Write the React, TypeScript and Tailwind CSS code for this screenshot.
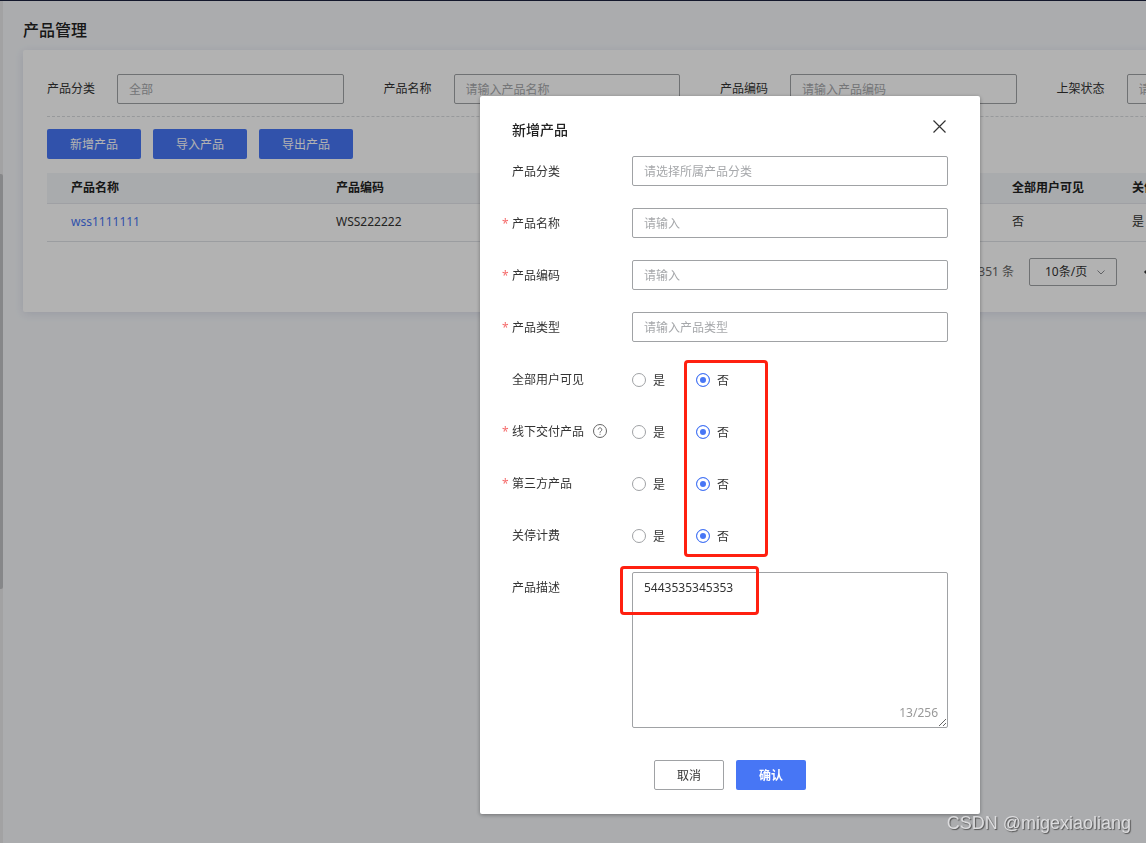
import { useState } from "react";

const filters = [
  { id: "category", label: "产品分类", placeholder: "全部" },
  { id: "name", label: "产品名称", placeholder: "请输入产品名称" },
  { id: "code", label: "产品编码", placeholder: "请输入产品编码" },
  { id: "status", label: "上架状态", placeholder: "请选择" },
];

const textFields = [
  { id: "new-category", label: "产品分类", placeholder: "请选择所属产品分类", required: false },
  { id: "new-name", label: "产品名称", placeholder: "请输入", required: true },
  { id: "new-code", label: "产品编码", placeholder: "请输入", required: true },
  { id: "new-type", label: "产品类型", placeholder: "请输入产品类型", required: true },
];

const radioFields = [
  { id: "visible", label: "全部用户可见", required: false, help: false },
  { id: "offline", label: "线下交付产品", required: true, help: true },
  { id: "third", label: "第三方产品", required: true, help: false },
  { id: "billing", label: "关停计费", required: false, help: false },
];

const inputClass =
  "h-[30px] min-w-0 flex-1 rounded-xs border border-[#a0a2a5] bg-white px-[11px] text-xs text-[#333] outline-none placeholder:text-[#a6a8ab]";

const labelClass = "flex h-[30px] w-[130px] items-center pt-[2px]";

function HelpIcon() {
  return (
    <svg viewBox="0 0 14 14" className="mb-[2px] ml-[9px] size-[14px]" fill="none" stroke="#666" aria-hidden="true">
      <circle cx="7" cy="7" r="6.5" strokeWidth="1" />
      <path d="M5.200 5.600a1.800 1.800 0 1 1 2.700 1.600c-.6.4-.9.7-.9 1.500M7 9.800v1" strokeWidth="1" />
    </svg>
  );
}

function Star({ show }: { show: boolean }) {
  return <span className="w-[10px] shrink-0 text-[#f56c6c]">{show ? "*" : ""}</span>;
}

function ProductPage() {
  return (
    <main className="min-w-[1401px] pr-6 pb-6 pl-[23px]">
      <h1 className="pt-[17px] pb-2 text-base leading-6 font-medium text-[#222]">产品管理</h1>
      <section className="rounded-xs bg-white px-6 pt-6 pb-[26px] shadow-[0_2px_10px_rgba(40,50,120,0.12)]">
        <form className="grid grid-cols-4 gap-10 border-b border-dashed border-[#d9dbdf] pb-3">
          {filters.map((f) => (
            <div key={f.id} className="flex items-center">
              <label htmlFor={f.id} className="w-[70px]">
                {f.label}
              </label>
              <input id={f.id} placeholder={f.placeholder} className={inputClass} />
            </div>
          ))}
        </form>
        <div className="mt-3 mb-[14px] flex gap-3">
          {["新增产品", "导入产品", "导出产品"].map((text) => (
            <button key={text} type="button" className="h-[30px] w-[94px] rounded-xs bg-[#4776f5] pt-[2px] text-white">
              {text}
            </button>
          ))}
        </div>
        <table className="w-full table-fixed border-collapse text-left">
          <colgroup>
            <col className="w-[265px]" />
            <col className="w-[676px]" />
            <col className="w-[120px]" />
            <col />
          </colgroup>
          <thead>
            <tr className="h-[30px] border-b border-[#e4e6eb] bg-[#f3f5f8] text-[#222]">
              {["产品名称", "产品编码", "全部用户可见", "关停计费"].map((h) => (
                <th key={h} className="pl-6 font-bold">
                  {h}
                </th>
              ))}
            </tr>
          </thead>
          <tbody>
            <tr className="h-[38px] border-b border-[#dfe1e6]">
              <td className="pl-6">
                <a href="#product" className="text-[#4776f5]">
                  wss1111111
                </a>
              </td>
              <td className="pl-6">WSS222222</td>
              <td className="pl-6">否</td>
              <td className="pl-6">是</td>
            </tr>
          </tbody>
        </table>
        <div className="mt-4 flex items-center">
          <span className="w-[967px] text-right text-[#666]">351 条</span>
          <div className="relative ml-[15px]">
            <select
              aria-label="每页条数"
              className="h-7 w-[88px] appearance-none rounded-xs border border-[#a0a2a5] bg-white pl-[15px] text-xs outline-none"
            >
              <option>10条/页</option>
            </select>
            <svg
              viewBox="0 0 10 10"
              className="pointer-events-none absolute top-[9px] right-[11px] size-[10px]"
              fill="none"
              stroke="#8a8c90"
              aria-hidden="true"
            >
              <path d="M1.500 3.500 5 7l3.500-3.500" />
            </svg>
          </div>
          <button type="button" aria-label="上一页" className="ml-6">
            <svg viewBox="0 0 12 12" className="size-3" fill="none" stroke="#333" strokeWidth="1.500">
              <path d="M7 3 4 6l3 3" />
            </svg>
          </button>
        </div>
      </section>
    </main>
  );
}

function RadioGroup({ id, label }: { id: string; label: string }) {
  return (
    <div role="radiogroup" aria-label={label} className="flex h-8 items-center gap-[31px]">
      {["是", "否"].map((text) => (
        <label key={text} className="flex items-center gap-[7px]">
          <input
            type="radio"
            name={id}
            value={text}
            defaultChecked={text === "否"}
            className="size-[14px] appearance-none rounded-full border border-[#a0a2a5] bg-white checked:border-[#4776f5] checked:bg-[#4776f5] checked:shadow-[inset_0_0_0_3px_white]"
          />
          <span className="pt-[2px]">{text}</span>
        </label>
      ))}
    </div>
  );
}

function ProductDialog() {
  const [description, setDescription] = useState("5443535345353");
  return (
    <div
      role="dialog"
      aria-modal="true"
      aria-labelledby="dialog-title"
      className="relative w-[500px] rounded-xs bg-white pr-8 pb-6 pl-[22px] shadow-[0_1px_4px_rgba(0,0,0,0.35)]"
    >
      <header className="flex h-[60px] items-center justify-between pt-2 pl-[10px]">
        <h2 id="dialog-title" className="text-sm font-medium text-[#222]">
          新增产品
        </h2>
        <button type="button" aria-label="关闭" className="mb-2 p-[2px]">
          <svg viewBox="0 0 13 13" className="size-[13px]" fill="none" stroke="#333" strokeWidth="1.200">
            <path d="m.5.5 12 12M12.500.5l-12 12" />
          </svg>
        </button>
      </header>
      <form>
        {textFields.map((f) => (
          <div key={f.id} className="mb-[22px] flex items-center">
            <label htmlFor={f.id} className={labelClass}>
              <Star show={f.required} />
              {f.label}
            </label>
            <input id={f.id} placeholder={f.placeholder} className={inputClass} />
          </div>
        ))}
        {radioFields.map((f) => (
          <div key={f.id} className="mb-5 flex">
            <div className={labelClass}>
              <Star show={f.required} />
              {f.label}
              {f.help && <HelpIcon />}
            </div>
            <RadioGroup id={f.id} label={f.label} />
          </div>
        ))}
        <div className="flex">
          <label htmlFor="description" className={labelClass}>
            <Star show={false} />
            产品描述
          </label>
          <div className="relative flex-1">
            <textarea
              id="description"
              maxLength={256}
              value={description}
              onChange={(e) => setDescription(e.target.value)}
              className="block h-[156px] w-full resize-y rounded-xs border border-[#a0a2a5] bg-white px-[11px] py-[5px] text-xs leading-5 outline-none"
            />
            <span className="pointer-events-none absolute right-[10px] bottom-[7px] text-[#999]">
              {description.length}/256
            </span>
          </div>
        </div>
        <div className="mt-8 flex justify-center gap-3 pl-[10px]">
          <button type="button" className="h-[30px] w-[70px] rounded-xs border border-[#a0a2a5] bg-white pt-[2px]">
            取消
          </button>
          <button type="submit" className="h-[30px] w-[70px] rounded-xs bg-[#4776f5] pt-[2px] font-bold text-white">
            确认
          </button>
        </div>
      </form>
      <div className="pointer-events-none absolute top-[264px] left-[204px] h-[197px] w-[84px] rounded-sm border-3 border-[#ff2010]" />
      <div className="pointer-events-none absolute top-[470px] left-[140px] h-[49px] w-[139px] rounded-sm border-3 border-[#ff2010]" />
    </div>
  );
}

export default function App() {
  return (
    <div className="relative min-h-screen overflow-hidden border-t border-[#1c2340] bg-[#f5f7fa] font-['Noto_Sans','Noto_Sans_CJK_SC',sans-serif] text-xs leading-4 text-[#333]">
      <div className="absolute inset-y-0 left-0 w-[3px] bg-[#e8e8ea]">
        <div className="mt-[173px] h-[415px] rounded-r-xs bg-[#c1c2c4]" />
      </div>
      <ProductPage />
      <div className="fixed inset-0 flex items-start justify-center overflow-auto bg-black/30 pt-24 pl-[314px]">
        <ProductDialog />
      </div>
      <div className="pointer-events-none fixed right-[15px] bottom-2 font-['Liberation_Sans',sans-serif] text-lg leading-6 text-[#dcdcde] [text-shadow:1px_1px_1px_#555]">
        CSDN @migexiaoliang
      </div>
    </div>
  );
}
